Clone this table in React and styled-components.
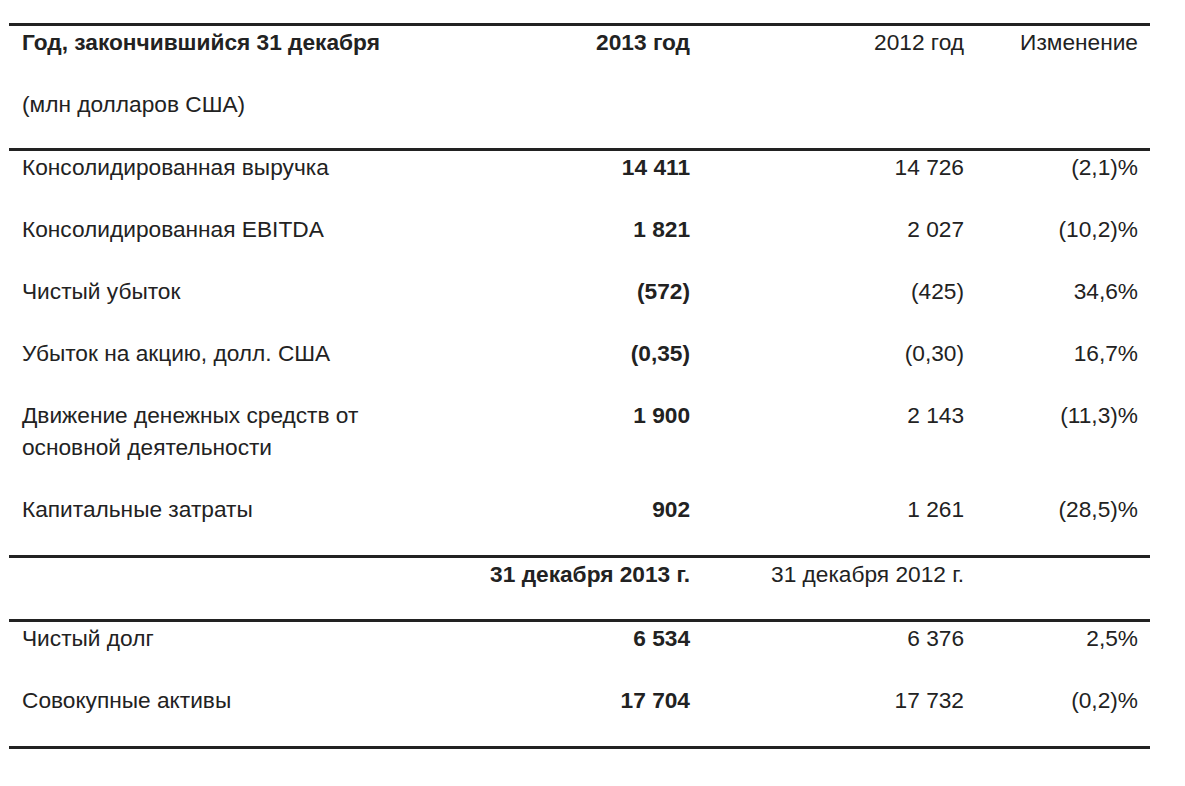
import React from 'react';
import styled, {createGlobalStyle} from 'styled-components';

const GlobalStyle = createGlobalStyle`
  body {
    margin: 0;
    background: #fff;
    font-family: "Liberation Sans", Arial, sans-serif;
    color: #222;
  }
`;

const Page = styled.div`
  padding: 23px 0 0 9px;
`;

const Table = styled.div`
  width: 1141px;
  font-size: 22.7px;
  line-height: 32px;
  border-bottom: 3px solid #222;
`;

const Section = styled.div`
  border-top: 3px solid #222;
`;

const Row = styled.div`
  display: grid;
  grid-template-columns: 375px 318px 274px 174px;
  padding-bottom: ${({$gap}) => $gap ?? 30}px;
`;

const Cell = styled.div`
  padding: 0 12px 0 13px;
  text-align: ${({$align}) => $align || 'left'};
  font-weight: ${({$bold}) => ($bold ? 'bold' : 'normal')};
  white-space: ${({$nowrap}) => ($nowrap ? 'nowrap' : 'normal')};
`;

const rows = [
  ['Консолидированная выручка', '14 411', '14 726', '(2,1)%'],
  ['Консолидированная EBITDA', '1 821', '2 027', '(10,2)%'],
  ['Чистый убыток', '(572)', '(425)', '34,6%'],
  ['Убыток на акцию, долл. США', '(0,35)', '(0,30)', '16,7%'],
  ['Движение денежных средств от основной деятельности', '1 900', '2 143', '(11,3)%'],
  ['Капитальные затраты', '902', '1 261', '(28,5)%'],
];

const balance = [
  ['Чистый долг', '6 534', '6 376', '2,5%'],
  ['Совокупные активы', '17 704', '17 732', '(0,2)%'],
];

const DataRow = ({data}) => (
  <Row>
    <Cell>{data[0]}</Cell>
    <Cell $align="right" $bold>{data[1]}</Cell>
    <Cell $align="right">{data[2]}</Cell>
    <Cell $align="right">{data[3]}</Cell>
  </Row>
);

const App = () => (
  <Page>
    <GlobalStyle />
    <Table>
      <Section>
        <Row>
          <Cell $bold $nowrap>Год, закончившийся 31 декабря</Cell>
          <Cell $align="right" $bold>2013 год</Cell>
          <Cell $align="right">2012 год</Cell>
          <Cell $align="right">Изменение</Cell>
        </Row>
        <Row $gap={28}>
          <Cell>(млн долларов США)</Cell>
        </Row>
      </Section>
      <Section>
        {rows.map((r) => (
          <DataRow key={r[0]} data={r} />
        ))}
      </Section>
      <Section>
        <Row $gap={29}>
          <Cell />
          <Cell $align="right" $bold>31 декабря 2013 г.</Cell>
          <Cell $align="right">31 декабря 2012 г.</Cell>
          <Cell />
        </Row>
      </Section>
      <Section>
        {balance.map((r) => (
          <DataRow key={r[0]} data={r} />
        ))}
      </Section>
    </Table>
  </Page>
);

export default App;
